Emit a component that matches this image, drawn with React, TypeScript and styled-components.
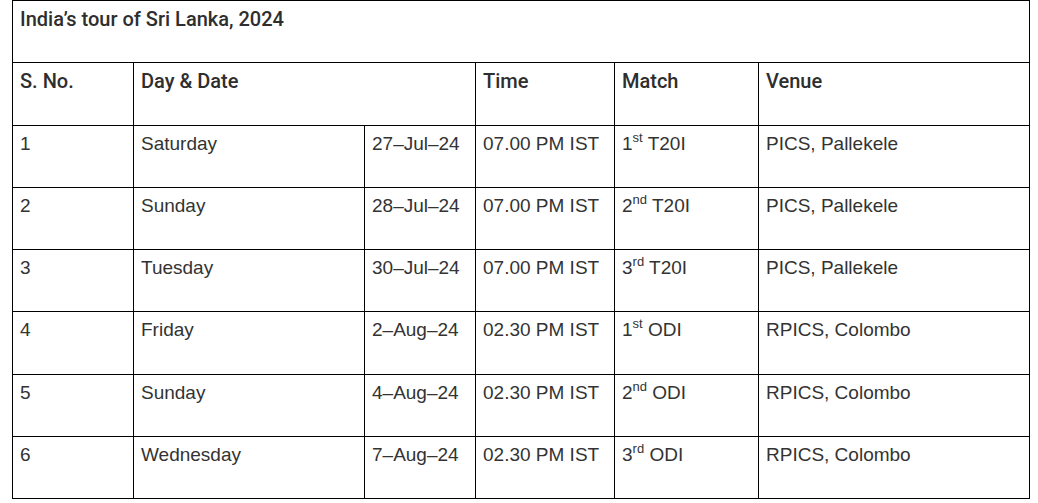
import React from 'react';
import styled, { createGlobalStyle } from 'styled-components';

const GlobalStyle = createGlobalStyle`
  html, body {
    margin: 0;
    padding: 0;
    background: #ffffff;
  }
`;

const SCPage = styled.div`
  padding: 0 9px 0 12px;
  width: 1038px;
  box-sizing: border-box;
`;

const SCTable = styled.table`
  width: 1017px;
  border-collapse: collapse;
  table-layout: fixed;
  font-family: 'Liberation Sans', Arial, sans-serif;
  color: #333333;
`;

const SCRow = styled.tr`
  height: 62.25px;
`;

const SCCell = styled.td<{ $head?: boolean }>`
  border: 1px solid #000000;
  vertical-align: top;
  padding: ${(p) => (p.$head ? '6px' : '5px')} 7px 0;
  font-family: ${(p) => (p.$head ? "Roboto, 'Liberation Sans', sans-serif" : "'Liberation Sans', Arial, sans-serif")};
  font-weight: ${(p) => (p.$head ? 500 : 400)};
  font-size: ${(p) => (p.$head ? '20px' : '19px')};
  line-height: 25px;
  white-space: nowrap;
  color: ${(p) => (p.$head ? '#2e2e2e' : '#333333')};
`;

const SCSup = styled.sup`
  font-size: 13px;
  line-height: 0;
  vertical-align: 8px;
`;

interface IFixture {
  no: number;
  day: string;
  date: string;
  time: string;
  nth: string;
  suffix: string;
  format: string;
  venue: string;
}

const fixtures: IFixture[] = [
  { no: 1, day: 'Saturday', date: '27\u2013Jul\u201324', time: '07.00 PM IST', nth: '1', suffix: 'st', format: 'T20I', venue: 'PICS, Pallekele' },
  { no: 2, day: 'Sunday', date: '28\u2013Jul\u201324', time: '07.00 PM IST', nth: '2', suffix: 'nd', format: 'T20I', venue: 'PICS, Pallekele' },
  { no: 3, day: 'Tuesday', date: '30\u2013Jul\u201324', time: '07.00 PM IST', nth: '3', suffix: 'rd', format: 'T20I', venue: 'PICS, Pallekele' },
  { no: 4, day: 'Friday', date: '2\u2013Aug\u201324', time: '02.30 PM IST', nth: '1', suffix: 'st', format: 'ODI', venue: 'RPICS, Colombo' },
  { no: 5, day: 'Sunday', date: '4\u2013Aug\u201324', time: '02.30 PM IST', nth: '2', suffix: 'nd', format: 'ODI', venue: 'RPICS, Colombo' },
  { no: 6, day: 'Wednesday', date: '7\u2013Aug\u201324', time: '02.30 PM IST', nth: '3', suffix: 'rd', format: 'ODI', venue: 'RPICS, Colombo' },
];

const App = () => {
  return (
    <SCPage>
      <GlobalStyle />
      <SCTable>
        <colgroup>
          <col style={{ width: 121 }} />
          <col style={{ width: 231 }} />
          <col style={{ width: 111 }} />
          <col style={{ width: 139 }} />
          <col style={{ width: 144 }} />
          <col style={{ width: 271 }} />
        </colgroup>
        <tbody>
          <SCRow>
            <SCCell $head colSpan={6}>
              India’s tour of Sri Lanka, 2024
            </SCCell>
          </SCRow>
          <SCRow>
            <SCCell $head>S. No.</SCCell>
            <SCCell $head colSpan={2}>
              Day &amp; Date
            </SCCell>
            <SCCell $head>Time</SCCell>
            <SCCell $head>Match</SCCell>
            <SCCell $head>Venue</SCCell>
          </SCRow>
          {fixtures.map((f) => (
            <SCRow key={f.no}>
              <SCCell>{f.no}</SCCell>
              <SCCell>{f.day}</SCCell>
              <SCCell>{f.date}</SCCell>
              <SCCell>{f.time}</SCCell>
              <SCCell>
                {f.nth}
                <SCSup>{f.suffix}</SCSup> {f.format}
              </SCCell>
              <SCCell>{f.venue}</SCCell>
            </SCRow>
          ))}
        </tbody>
      </SCTable>
    </SCPage>
  );
};

export default App;
